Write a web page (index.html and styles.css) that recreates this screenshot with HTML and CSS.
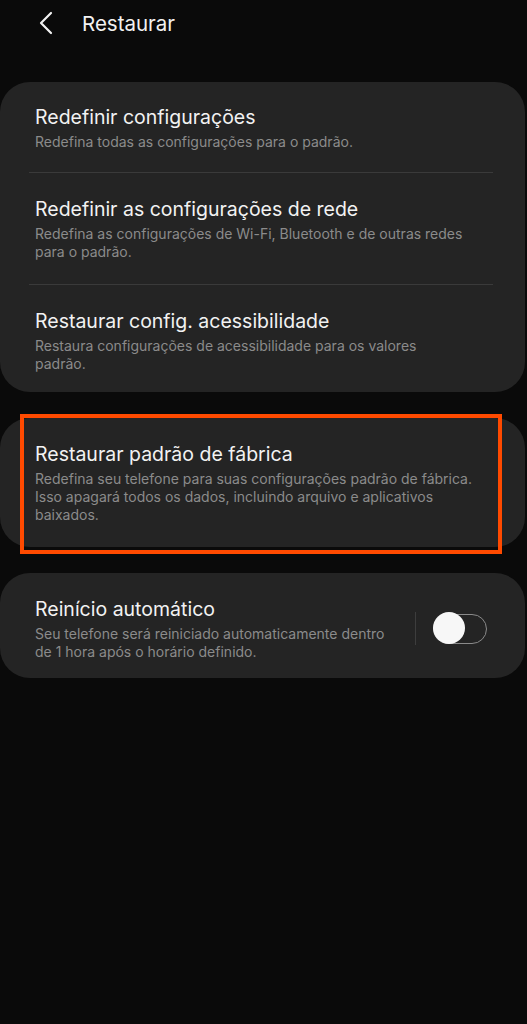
FILE: index.html
```html
<!DOCTYPE html>
<html lang="pt">
<head>
<meta charset="utf-8">
<title>Restaurar</title>
<link rel="stylesheet" href="styles.css">
</head>
<body>
<header class="topbar">
  <svg class="back" width="16" height="24" viewBox="0 0 16 24"><path d="M13 2 L3 12 L13 22" fill="none" stroke="#f2f2f2" stroke-width="2.2" stroke-linecap="round" stroke-linejoin="round"/></svg>
  <h1 class="page-title">Restaurar</h1>
</header>
<main class="content">
  <section class="card card-group">
    <div class="item">
      <div class="item-title">Redefinir configurações</div>
      <div class="item-sub">Redefina todas as configurações para o padrão.</div>
    </div>
    <div class="divider"></div>
    <div class="item">
      <div class="item-title">Redefinir as configurações de rede</div>
      <div class="item-sub">Redefina as configurações de Wi-Fi, Bluetooth e de outras redes para o padrão.</div>
    </div>
    <div class="divider"></div>
    <div class="item">
      <div class="item-title">Restaurar config. acessibilidade</div>
      <div class="item-sub">Restaura configurações de acessibilidade para os valores<br>padrão.</div>
    </div>
  </section>
  <section class="card card-highlight">
    <div class="item">
      <div class="item-title">Restaurar padrão de fábrica</div>
      <div class="item-sub">Redefina seu telefone para suas configurações padrão de fábrica. Isso apagará todos os dados, incluindo arquivo e aplicativos baixados.</div>
    </div>
    <div class="highlight"></div>
  </section>
  <section class="card">
    <div class="item item-switch">
      <div class="item-text">
        <div class="item-title">Reinício automático</div>
        <div class="item-sub">Seu telefone será reiniciado automaticamente dentro de 1 hora após o horário definido.</div>
      </div>
      <div class="vline"></div>
      <div class="switch"><div class="knob"></div></div>
    </div>
  </section>
</main>
</body>
</html>
```
FILE: styles.css
```css
html, body {
  margin: 0;
  padding: 0;
  background: #0a0a0a;
}
body {
  width: 527px;
  min-height: 1024px;
  font-family: Inter, Roboto, "Noto Sans", "Liberation Sans", sans-serif;
  color: #f2f2f2;
}
.topbar {
  display: flex;
  align-items: center;
  height: 48px;
  padding-left: 38px;
}
.back {
  display: block;
  margin-top: -2px;
}
.page-title {
  margin: 0 0 0 28px;
  font-size: 20.5px;
  font-weight: 400;
  line-height: 26px;
  color: #f2f2f2;
}
.content {
  display: flex;
  flex-direction: column;
  gap: 26px;
  padding-top: 34px;
  padding-right: 2px;
}
.card {
  background: #242424;
  border-radius: 30px;
}
.card-highlight {
  position: relative;
}
.highlight {
  position: absolute;
  left: 20px;
  right: 23px;
  top: -4px;
  bottom: -7px;
  border: 4px solid #ff4a00;
  box-sizing: border-box;
}
.item {
  padding: 23px 53px 23px 35px;
}
.card-group .item:first-child {
  padding-top: 22px;
  padding-bottom: 21px;
}
.card-group .item:last-child {
  padding-bottom: 19px;
}
.item-title {
  font-size: 19.5px;
  line-height: 26px;
  color: #f2f2f2;
}
.item-sub {
  margin-top: 3px;
  font-size: 14px;
  line-height: 18px;
  color: #8b8b8b;
}
.divider {
  height: 1px;
  margin: 0 32px 0 29px;
  background: #3a3a3a;
}
.item-switch {
  display: flex;
  align-items: center;
  padding-right: 38px;
  padding-bottom: 17px;
}
.item-text {
  flex: 1;
  padding-right: 15px;
}
.vline {
  width: 1px;
  height: 33px;
  background: #3d3d3d;
  margin-right: 17px;
}
.switch {
  position: relative;
  width: 54px;
  height: 30px;
  box-sizing: border-box;
  border: 1.5px solid #8a8a8a;
  border-radius: 15px;
}
.knob {
  position: absolute;
  left: -1.5px;
  top: -2.5px;
  width: 32px;
  height: 32px;
  border-radius: 50%;
  background: #f7f7f7;
}
```
